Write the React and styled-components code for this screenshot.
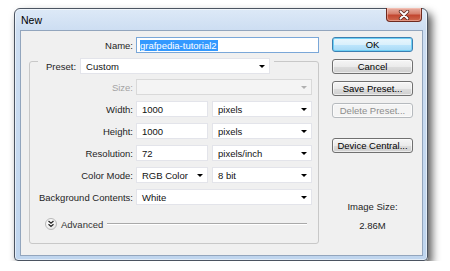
import React from 'react';
import styled, { createGlobalStyle } from 'styled-components';

const Global = createGlobalStyle`
  html, body { margin: 0; padding: 0; background: #fff; }
  body {
    font-family: "Liberation Sans", Arial, sans-serif;
    font-size: 9.5px;
    color: #1e1e1e;
  }
  * { box-sizing: border-box; }
`;

const Window = styled.div`
  margin: 8px 0 0 14px;
  width: 414px;
  height: 253px;
  border: 1px solid #4b5461;
  border-radius: 6px 6px 4px 4px;
  background: linear-gradient(180deg, #dde9f7 0px, #cddef2 21px, #bfd5ee 100%);
  box-shadow: inset 0 0 0 1px rgba(255, 255, 255, 0.55), 4px 5px 8px rgba(0, 0, 0, 0.65);
  display: flex;
  flex-direction: column;
  padding: 0 4px 4px 5px;
`;

const TitleBar = styled.div`
  height: 21px;
  display: flex;
  align-items: flex-start;
  justify-content: space-between;
`;

const Title = styled.div`
  padding: 1px 0 0 1px;
  line-height: 20px;
  font-size: 10.5px;
  color: #000;
`;

const CloseButton = styled.div`
  width: 36px;
  height: 14px;
  margin: -1px 1px 0 0;
  border: 1px solid #6e2a1f;
  border-top: none;
  border-radius: 0 0 4px 4px;
  background: linear-gradient(180deg, #e9b1a4 0%, #d7806d 45%, #c2462f 55%, #cf6a4f 100%);
  box-shadow: inset 0 0 0 1px rgba(255, 210, 200, 0.45);
  display: flex;
  align-items: center;
  justify-content: center;
`;

const Panel = styled.div`
  flex: 1;
  border: 1px solid #92a5bd;
  background: #f0f0f0;
  display: grid;
  grid-template-columns: 298px 81px;
  column-gap: 13px;
  align-items: start;
`;

const LeftColumn = styled.div`
  padding-top: 6px;
  display: flex;
  flex-direction: column;
`;

const NameRow = styled.div`
  display: grid;
  grid-template-columns: 112px 183px;
  column-gap: 3px;
  align-items: center;
  height: 16px;
`;

const Label = styled.div`
  text-align: right;
  white-space: nowrap;
  color: ${(p) => (p.$disabled ? '#a3a3a3' : '#1e1e1e')};
`;

const Field = styled.div`
  height: 16px;
  display: flex;
  align-items: center;
  background: ${(p) => (p.$disabled ? '#f4f4f4' : '#fff')};
  border: 1px solid ${(p) => (p.$focus ? '#7aa7d8' : p.$disabled ? '#d9d9d9' : '#e3e4ea')};
  padding: 0 4px 0 ${(p) => (p.$focus ? '3px' : '5px')};
  white-space: nowrap;
  overflow: hidden;
  color: #111;
`;

const Selected = styled.span`
  background: #3399ff;
  color: #fff;
  line-height: 11px;
  padding: 0 1px 0 0;
`;

const Arrow = styled.span`
  margin-left: auto;
  width: 0;
  height: 0;
  border-left: 3px solid transparent;
  border-right: 3px solid transparent;
  border-top: 3px solid ${(p) => (p.$disabled ? '#b0b0b0' : '#000')};
`;

const Group = styled.div`
  margin: 8px 0 0 8px;
  width: 290px;
  border: 1px solid #c8c8c8;
  border-radius: 3px;
  padding: 0 5px 13px 0;
  display: flex;
  flex-direction: column;
`;

const Legend = styled.div`
  align-self: flex-start;
  margin: -4px 0 0 8px;
  padding: 0 4px 0 8px;
  background: #f0f0f0;
  display: flex;
  align-items: center;
  gap: 4px;
  height: 16px;
`;

const Rows = styled.div`
  margin-top: 5px;
  display: flex;
  flex-direction: column;
  gap: 6px;
`;

const Row = styled.div`
  display: grid;
  grid-template-columns: 103px 176px;
  column-gap: 3px;
  align-items: center;
  height: 16px;
`;

const Split = styled.div`
  display: grid;
  grid-template-columns: 72px 100px;
  column-gap: 4px;
`;

const AdvancedRow = styled.div`
  margin: 13px 0 0 15px;
  height: 12px;
  display: flex;
  align-items: center;
`;

const Toggle = styled.div`
  width: 12px;
  height: 12px;
  border-radius: 50%;
  border: 1px solid #b9b9b9;
  background: radial-gradient(circle at 40% 35%, #ffffff 0%, #f3f3f3 50%, #dcdcdc 100%);
  display: flex;
  align-items: center;
  justify-content: center;
  margin-right: 4px;
`;

const AdvancedText = styled.span`
  color: #333;
`;

const Rule = styled.div`
  margin-left: 4px;
  width: 200px;
  height: 2px;
  border-top: 1px solid #a9a9a9;
  border-bottom: 1px solid #ffffff;
`;

const RightColumn = styled.div`
  padding-top: 6px;
  display: flex;
  flex-direction: column;
  gap: 7px;
`;

const Button = styled.div`
  width: 81px;
  height: 15px;
  margin-top: ${(p) => (p.$spaced ? '13px' : '0')};
  border: 1px solid ${(p) => (p.$primary ? '#3c7fb1' : p.$disabled ? '#b6babe' : '#707070')};
  border-radius: 3px;
  background: ${(p) =>
    p.$primary
      ? 'linear-gradient(180deg, #eaf6fd 0%, #d9f0fc 50%, #bee6fd 51%, #a7d9f5 100%)'
      : p.$disabled
      ? '#f4f4f4'
      : 'linear-gradient(180deg, #f6f6f6 0%, #ebebeb 50%, #dddddd 51%, #cfcfcf 100%)'};
  box-shadow: ${(p) => (p.$primary ? 'inset 0 0 0 1px #6fd0f5' : 'inset 0 0 0 1px rgba(255,255,255,0.6)')};
  color: ${(p) => (p.$disabled ? '#8d8d8d' : '#000')};
  text-align: center;
  line-height: 13px;
  white-space: nowrap;
`;

const Info = styled.div`
  margin-top: 37px;
  text-align: center;
  line-height: 19px;
  color: #1e1e1e;
`;

const Select = ({ children, disabled, style }) => (
  <Field $disabled={disabled} style={style}>
    {children}
    <Arrow $disabled={disabled} />
  </Field>
);

export default function App() {
  return (
    <>
      <Global />
      <Window>
        <TitleBar>
          <Title>New</Title>
          <CloseButton>
            <svg width="12" height="10" viewBox="0 0 12 10">
              <path d="M2.5 1.5 L9.5 8.5 M9.5 1.5 L2.5 8.5" stroke="#5a2a22" strokeWidth="3.4" strokeLinecap="round" />
              <path d="M2.5 1.5 L9.5 8.5 M9.5 1.5 L2.5 8.5" stroke="#ffffff" strokeWidth="1.8" strokeLinecap="round" />
            </svg>
          </CloseButton>
        </TitleBar>
        <Panel>
          <LeftColumn>
            <NameRow>
              <Label>Name:</Label>
              <Field $focus>
                <Selected>grafpedia-tutorial2</Selected>
              </Field>
            </NameRow>
            <Group>
              <Legend>
                <Label>Preset:</Label>
                <Select style={{ width: 190 }}>Custom</Select>
              </Legend>
              <Rows>
                <Row>
                  <Label $disabled>Size:</Label>
                  <Select disabled />
                </Row>
                <Row>
                  <Label>Width:</Label>
                  <Split>
                    <Field>1000</Field>
                    <Select>pixels</Select>
                  </Split>
                </Row>
                <Row>
                  <Label>Height:</Label>
                  <Split>
                    <Field>1000</Field>
                    <Select>pixels</Select>
                  </Split>
                </Row>
                <Row>
                  <Label>Resolution:</Label>
                  <Split>
                    <Field>72</Field>
                    <Select>pixels/inch</Select>
                  </Split>
                </Row>
                <Row>
                  <Label>Color Mode:</Label>
                  <Split>
                    <Select>RGB Color</Select>
                    <Select>8 bit</Select>
                  </Split>
                </Row>
                <Row>
                  <Label>Background Contents:</Label>
                  <Select>White</Select>
                </Row>
              </Rows>
              <AdvancedRow>
                <Toggle>
                  <svg width="8" height="8" viewBox="0 0 8 8">
                    <path d="M1.5 1 L4 3.2 L6.5 1 M1.5 4.3 L4 6.5 L6.5 4.3" fill="none" stroke="#2a2a2a" strokeWidth="1.3" />
                  </svg>
                </Toggle>
                <AdvancedText>Advanced</AdvancedText>
                <Rule />
              </AdvancedRow>
            </Group>
          </LeftColumn>
          <RightColumn>
            <Button $primary>OK</Button>
            <Button>Cancel</Button>
            <Button>Save Preset...</Button>
            <Button $disabled>Delete Preset...</Button>
            <Button $spaced>Device Central...</Button>
            <Info>
              <div>Image Size:</div>
              <div>2.86M</div>
            </Info>
          </RightColumn>
        </Panel>
      </Window>
    </>
  );
}
